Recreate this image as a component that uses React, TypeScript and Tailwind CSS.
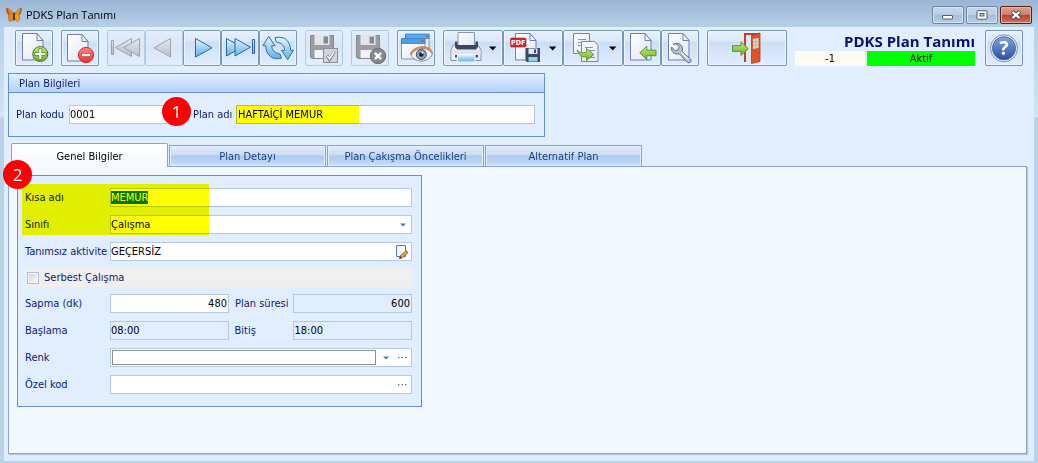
import React from 'react';

const tabs = ['Genel Bilgiler', 'Plan Detayı', 'Plan Çakışma Öncelikleri', 'Alternatif Plan'];

const fieldClass =
  'h-[19px] border border-[#b3c8e3] bg-white pr-px text-[11px] leading-4 text-black outline-none rounded-none';
const readOnlyClass =
  'h-[19px] border border-[#b3c8e3] bg-[#e1eeff] pr-px text-[11px] leading-4 text-black outline-none rounded-none';

type ToolProps = {
  label: string;
  disabled?: boolean;
  width?: number;
  children: React.ReactNode;
};

function Tool({ label, disabled, width = 38, children }: ToolProps) {
  return (
    <button
      type="button"
      aria-label={label}
      disabled={disabled}
      className={
        disabled
          ? 'h-9 shrink-0 rounded-[2px] border border-[#b3cae6] bg-linear-to-b from-[#e2edfb] via-[#d9e6f8] to-[#e2eeff]'
          : 'h-9 shrink-0 rounded-[2px] border border-[#7896c2] bg-[linear-gradient(#e6f0fd,#dbe8f9_30%,#cddef4_32%,#e0edff)] shadow-[inset_0_0_0_1px_#eef5ff]'
      }
    >
      <svg width={width - 2} height={34} viewBox={`1 1 ${width - 2} 34`} className="block">
        {children}
      </svg>
    </button>
  );
}

function Caret() {
  return <path d="M46 16.4h7.4l-3.7 4z" fill="#000" />;
}

function Page({ x = 7, y = 3, w = 21.5, h = 27.5 }) {
  return (
    <g stroke="#6f7fb0" strokeWidth="1">
      <path
        d={`M${x + 0.5} ${y + 0.5}h${w - 7}l6 7v${h - 8}h-${w - 1}z`}
        fill="url(#paper)"
      />
      <path d={`M${x + w - 6.5} ${y + 0.5}v7h6z`} fill="#f4f8ff" />
    </g>
  );
}

function Floppy() {
  return (
    <g>
      <path d="M5 5h24v24H7l-2-2z" fill="#9a9da1" />
      <path d="M5.5 5.5h23v23H7l-1.500-1.500z" fill="none" stroke="#85888d" />
      <rect x="9.500" y="5" width="15" height="10" fill="#e3e5e8" />
      <rect x="18.500" y="6.500" width="4.500" height="7" fill="#85888d" />
      <rect x="9.500" y="20" width="15" height="8" fill="#f0f2f5" />
    </g>
  );
}

function Defs() {
  return (
    <svg width="0" height="0" className="absolute" aria-hidden="true">
      <defs>
        <linearGradient id="paper" x1="0" y1="0" x2="1" y2="1">
          <stop offset="0" stopColor="#ffffff" />
          <stop offset="1" stopColor="#dfe7f6" />
        </linearGradient>
        <linearGradient id="green" x1="0" y1="0" x2="0" y2="1">
          <stop offset="0" stopColor="#c9ea7c" />
          <stop offset="1" stopColor="#6dae2c" />
        </linearGradient>
        <linearGradient id="red" x1="0" y1="0" x2="0" y2="1">
          <stop offset="0" stopColor="#ff8a86" />
          <stop offset="1" stopColor="#ee2c2c" />
        </linearGradient>
        <linearGradient id="blue" x1="0" y1="0" x2="0" y2="1">
          <stop offset="0" stopColor="#e3f6fe" />
          <stop offset="1" stopColor="#5fb0e8" />
        </linearGradient>
        <linearGradient id="gray" x1="0" y1="0" x2="0" y2="1">
          <stop offset="0" stopColor="#e6e9ee" />
          <stop offset="1" stopColor="#b9bec6" />
        </linearGradient>
        <linearGradient id="help" x1="0" y1="0" x2="0" y2="1">
          <stop offset="0" stopColor="#86a6e0" />
          <stop offset="1" stopColor="#2450a6" />
        </linearGradient>
      </defs>
    </svg>
  );
}

function Butterfly() {
  return (
    <svg width="16" height="16" viewBox="0 0 16 16" aria-hidden="true">
      <path d="M7.500 8.500C6.500 4.500 3.500 1.500.3 1c0 3 .7 6 2.700 7.500C1.800 10 2.200 13 4.200 14.700c2-.7 3-3 3.300-5.200z" fill="#ee8412" stroke="#a8601c" strokeWidth=".6" />
      <path d="M8.500 8.500C9.500 4.500 12.500 1.500 15.700 1c0 3-.7 6-2.700 7.500 1.200 1.500.8 4.500-1.200 6.200-2-.7-3-3-3.300-5.200z" fill="#f79a22" stroke="#a8601c" strokeWidth=".6" />
      <path d="M2.500 4l3.500 3.500M13.500 4L10 7.500" stroke="#c96a10" strokeWidth=".6" />
      <path d="M.8 1.500L3 8.200M15.200 1.500L13 8.200" stroke="#5f3a1e" strokeWidth=".7" />
      <path d="M8 5.500v8" stroke="#3c2110" strokeWidth="1.500" />
    </svg>
  );
}

function Toolbar() {
  return (
    <div className="flex items-start gap-2 pt-[3px] pr-[11px] pl-[11px]">
      <Tool label="Yeni">
        <Page />
        <circle cx="25.300" cy="24" r="7.500" fill="url(#green)" stroke="#3f7a17" />
        <path d="M23.800 18.500h3v4h4v3h-4v4h-3v-4h-4v-3h4z" fill="#fff" stroke="#4d8a1e" strokeWidth=".8" />
      </Tool>
      <Tool label="Sil">
        <Page x={6} y={4} />
        <circle cx="25" cy="25" r="7.600" fill="url(#red)" stroke="#c52a2a" />
        <rect x="20.500" y="23.500" width="9" height="3" fill="#fff" stroke="#c73030" strokeWidth=".6" />
      </Tool>
      <div className="flex">
        <Tool label="İlk" disabled>
          <g fill="url(#gray)" stroke="#9ba1aa">
            <path d="M4.500 10.500h2v14h-2z" />
            <path d="M24.500 8.500v18L8.500 17.500z" />
            <path d="M32.500 8.500v18l-16-9z" />
          </g>
        </Tool>
        <Tool label="Önceki" disabled>
          <path d="M25.500 8.500v18.500L9 17.800z" fill="url(#gray)" stroke="#9ba1aa" />
        </Tool>
        <Tool label="Sonraki">
          <path d="M12.500 8.500v18.500L29 17.800z" fill="url(#blue)" stroke="#2d64a8" />
        </Tool>
        <Tool label="Son">
          <g fill="url(#blue)" stroke="#2d64a8">
            <path d="M5.500 8.500v17.500l15.500-8.800z" />
            <path d="M14 8.500v17.500l15.500-8.800z" />
            <path d="M31.500 9.500h2v14h-2z" />
          </g>
        </Tool>
        <Tool label="Yenile">
          <g fill="url(#blue)" stroke="#3470b0">
            <path d="M9.700 6.300L16 15.700h-3.200C12.800 20 15.500 22.800 21 24l1.500 4.200C14 30.500 7 26 6.800 15.700H4z" />
            <path d="M28.700 29.700l-6.300-9.400h3.200c0-4.300-2.700-7.100-8.200-8.300L15.900 7.800C24.400 5.500 31.400 10 31.600 20.300h2.800z" />
          </g>
        </Tool>
      </div>
      <Tool label="Kaydet" disabled>
        <Floppy />
        <rect x="18.500" y="18.500" width="14" height="14" fill="#d0d3d8" stroke="#8b8e93" />
        <path d="M22 25.500l2.500 4 5-8" fill="none" stroke="#7b7e83" strokeWidth="3" />
        <path d="M22.300 25.800l2.200 3.200 4.700-7.300" fill="none" stroke="#fff" strokeWidth="1.500" />
      </Tool>
      <Tool label="Vazgeç" disabled>
        <Floppy />
        <circle cx="27" cy="26" r="7.700" fill="#85888c" stroke="#6b6e72" />
        <path d="M23.800 22.800l6.400 6.400M30.200 22.800l-6.400 6.400" stroke="#fff" strokeWidth="2.600" />
      </Tool>
      <Tool label="Önizleme">
        <path d="M8.500 4.500h23.500v21H8.500z" fill="#eaf2fc" stroke="#7b93bf" />
        <path d="M8.500 4h23.500v4.500H8.500z" fill="#5aa9ea" stroke="#3b7fc4" strokeWidth=".8" />
        <path d="M4.500 9h23.500v20H4.500z" fill="url(#paper)" stroke="#7b93bf" />
        <path d="M4.500 8.500h23.500v5H4.500z" fill="#4b9fe6" stroke="#3b7fc4" strokeWidth=".8" />
        <path d="M24.500 10h2v2h-2zM29 5.500h2v1.500h-2z" fill="#e8453c" />
        <path d="M14 25c4-8 17-9 21.500-1-4 9-17 9.500-21.500 1z" fill="#f3f5f8" stroke="#6b6f7a" strokeWidth=".8" />
        <path d="M13.500 24.500c5-9.500 18-10 22-1" fill="none" stroke="#cf8b4a" strokeWidth="2" />
        <circle cx="24.300" cy="24.500" r="5" fill="#8ba2bd" stroke="#434b5c" />
        <circle cx="24.300" cy="24.500" r="2.300" fill="#1b2230" />
        <circle cx="25.500" cy="22.800" r="1" fill="#fff" />
      </Tool>
      <div className="flex">
        <Tool label="Yazdır" width={60}>
          <path d="M10 15h25l3 5v10.500H8V20z" fill="url(#paper)" stroke="#8691b2" />
          <path d="M15 2.500h16.500V16H15z" fill="url(#paper)" stroke="#8a94b5" />
          <path d="M12 11.500h2.500V15h18v-3.500H35V17l-2 2.500H14L12 17z" fill="#3d4660" />
          <path d="M8.500 20h29v5h-29z" fill="#dfe4f0" />
          <path d="M12 25h23v2.500H12z" fill="#47506b" />
          <path d="M14.500 24.500h17.500V32H14.500z" fill="url(#blue)" stroke="#f6f9ff" />
          <Caret />
        </Tool>
        <Tool label="PDF olarak kaydet" width={60}>
          <Page x={12} />
          <rect x="7.500" y="8" width="15.500" height="9" rx="1" fill="#cf2a2e" stroke="#a81d22" strokeWidth=".6" />
          <text x="15.200" y="15" textAnchor="middle" fontFamily="DejaVu Sans Condensed" fontSize="7" fontWeight="bold" fill="#fff">PDF</text>
          <path d="M22.500 18h14.500v14H24l-1.500-1.500z" fill="#3e4863" />
          <rect x="25.500" y="18.500" width="9" height="5.500" fill="#e4e9f3" />
          <rect x="31" y="19.500" width="2" height="3.500" fill="#3e4863" />
          <rect x="25.500" y="27" width="9" height="4.500" fill="#8fd0f5" />
          <Caret />
        </Tool>
        <Tool label="Kopyala" width={60}>
          <path d="M10.500 3.500h16v20h-16z" fill="url(#paper)" stroke="#7484b3" />
          <path d="M15 9.500h8M15 12.500h8M15 15.500h5" stroke="#8490b5" />
          <path d="M18.500 11.500h13l3.500 4v16H18.500z" fill="url(#paper)" stroke="#7484b3" />
          <path d="M22 17.500h8M24 20.500h8M27 27.500h5" stroke="#8490b5" />
          <path d="M14 20c2 2.500 5 3 9.500 2.500V18.500l7.500 6-7.500 6V27c-5 .5-8-2-9.500-7z" fill="url(#green)" stroke="#4f8a23" strokeWidth=".8" />
          <Caret />
        </Tool>
        <Tool label="İçe aktar">
          <Page />
          <path d="M16.800 22.700l7-6.500v4H33v5.500h-9.200v4z" fill="url(#green)" stroke="#4f9a2c" />
        </Tool>
        <Tool label="Ayarlar">
          <Page />
          <path
            d="M12 14.500c4-2.500 9.500-.5 9.500 4.500 0 1-.2 1.800-.5 2.500l8.500 7.500c2 2.500-1 5-3.300 3l-8-8.200c-4.700 1.200-8.500-2-7.700-6.800l3.700 3.700 3.200-1 .8-3-3.200-3z"
            fill="#b5c1d2"
            stroke="#5d6c87"
          />
          <path d="M20.500 22.500l7 7" stroke="#e7edf6" strokeWidth="1.500" />
        </Tool>
      </div>
      <Tool label="Çıkış" width={80}>
        <path d="M38 32V4h14" fill="none" stroke="#c5421c" strokeWidth="2" />
        <path d="M39 5h6v27h-6z" fill="#dbe9fb" />
        <path d="M44.500 5.500l8.500-2.500v28.500l-8.500 2z" fill="#dd5527" stroke="#b33c17" strokeWidth=".8" />
        <path d="M46 9l5.500-1v10L46 19z" fill="#dfe5d2" />
        <path d="M48.700 8.500v10M46 12.200l5.500-.8M46 15.600l5.500-.8" stroke="#c99a78" strokeWidth=".8" />
        <path d="M25.500 15.700H34v-3.900l7.300 6.900-7.300 6.700v-4h-8.500z" fill="url(#green)" stroke="#4f9a2c" />
      </Tool>
      <div className="mr-0.5 ml-auto w-[180px] shrink-0">
        <h1 className="h-[21px] text-right font-['Open_Sans','Noto_Sans',sans-serif] text-[15px] leading-[22px] font-bold text-[#04146e]">
          PDKS Plan Tanımı
        </h1>
        <div className="flex gap-0.5 text-center text-[11px] leading-[15px] text-black">
          <span className="w-[70px] bg-[#fffaf0]">-1</span>
          <span className="flex-1 bg-[#00ff00]">Aktif</span>
        </div>
      </div>
      <Tool label="Yardım">
        <circle cx="19" cy="18.300" r="13.500" fill="#e9eff8" stroke="#7f8fb0" />
        <circle cx="19" cy="18.300" r="11.500" fill="url(#help)" stroke="#4565a8" />
        <text x="19" y="25" textAnchor="middle" fontFamily="Open Sans" fontSize="19" fontWeight="bold" fill="#fff">?</text>
      </Tool>
    </div>
  );
}

function StepBadge({ n, className }: { n: number; className: string }) {
  return (
    <span
      className={`absolute z-20 flex size-[29px] items-center justify-center rounded-full bg-[#ff0000] font-['Open_Sans',sans-serif] text-[17px] leading-none text-white ${className}`}
    >
      {n}
    </span>
  );
}

function DownArrow({ className }: { className?: string }) {
  return (
    <svg width="6" height="4" viewBox="0 0 6 4" className={className} aria-hidden="true">
      <path d="M0 0.500h6L3 3.500z" fill="#4a78b0" />
    </svg>
  );
}

function Dots() {
  return (
    <svg width="9" height="2" viewBox="0 0 9 2" aria-hidden="true">
      <path d="M0 0h1.500v1.200H0zM3.500 0H5v1.200H3.500zM7 0h1.500v1.200H7z" fill="#4a78b0" />
    </svg>
  );
}

function Row({ id, label, children }: { id: string; label: string; children: React.ReactNode }) {
  return (
    <div className="flex h-[19px] items-center">
      <label htmlFor={id} className="w-[85px] shrink-0">{label}</label>
      {children}
    </div>
  );
}

function GeneralForm() {
  return (
    <div className="relative w-[405px] border border-[#6390cf] bg-[#e1eeff] pt-3 pr-[9px] pb-3 pl-[7px]">
      <StepBadge n={2} className="-top-[16px] -left-[15px]" />
      <div className="pointer-events-none absolute top-2 left-1 z-10 h-[51px] w-[187px] bg-[#ffff00] mix-blend-multiply" />
      <div className="flex flex-col gap-[7px]">
        <div className="flex flex-col gap-2">
          <Row id="kisa" label="Kısa adı">
            <input
              id="kisa"
              autoFocus
              onFocus={(e) => e.target.select()}
              defaultValue="MEMUR"
              className={`${fieldClass} min-w-0 flex-1 selection:bg-[#0078d7] selection:text-white`}
            />
          </Row>
          <Row id="sinif" label="Sınıfı">
            <div className="relative flex min-w-0 flex-1">
              <select id="sinif" className={`${fieldClass} w-full appearance-none`}>
                <option>Çalışma</option>
              </select>
              <DownArrow className="pointer-events-none absolute top-2 right-[6px]" />
            </div>
          </Row>
          <Row id="aktivite" label="Tanımsız aktivite">
            <div className="flex h-[19px] min-w-0 flex-1 items-center border border-[#b3c8e3] bg-white pr-[3px]">
              <input
                id="aktivite"
                defaultValue="GEÇERSİZ"
                className="min-w-0 flex-1 text-[11px] leading-4 text-black outline-none"
              />
              <button type="button" aria-label="Aktivite düzenle">
                <svg width="12" height="14" viewBox="0 0 12 14" className="block">
                  <path d="M.5.500h9v11h-9z" fill="#f2f6fd" stroke="#6077a8" />
                  <path d="M10.500 5.500l-6 5-1 3 3-.7 5.500-5z" fill="#e3a24f" stroke="#8a5722" strokeWidth=".8" />
                  <path d="M3.300 13.500l.8-2 1.700 1.500z" fill="#222" />
                </svg>
              </button>
            </div>
          </Row>
        </div>
        <label className="-mr-px flex h-[19px] items-center gap-[5px] bg-[#efefef] pl-[2px]">
          <input
            type="checkbox"
            className="size-3 appearance-none border border-[#a9bedb] bg-linear-to-br from-[#c9cdd4] to-white shadow-[inset_0_0_0_1px_#f4f7fb]"
          />
          Serbest Çalışma
        </label>
        <div className="flex flex-col gap-2">
          <Row id="sapma" label="Sapma (dk)">
            <input id="sapma" defaultValue="480" className={`${fieldClass} min-w-0 flex-1 text-right`} />
            <label htmlFor="sure" className="w-16 shrink-0 pl-1.5">Plan süresi</label>
            <input id="sure" readOnly value="600" className={`${readOnlyClass} min-w-0 flex-1 text-right`} />
          </Row>
          <Row id="baslama" label="Başlama">
            <input id="baslama" readOnly value="08:00" className={`${readOnlyClass} min-w-0 flex-1`} />
            <label htmlFor="bitis" className="w-16 shrink-0 pl-1.5">Bitiş</label>
            <input id="bitis" readOnly value="18:00" className={`${readOnlyClass} min-w-0 flex-1 pl-px`} />
          </Row>
          <Row id="renk" label="Renk">
            <div className="flex h-[19px] min-w-0 flex-1 items-center border border-[#b3c8e3] bg-white pr-1 pl-px">
              <input
                id="renk"
                readOnly
                className="h-[15px] min-w-0 flex-1 border border-[#8f8f8f] bg-white outline-none"
              />
              <button type="button" aria-label="Renk seç" className="flex h-4 w-[19px] items-center justify-center">
                <DownArrow />
              </button>
              <button type="button" aria-label="Diğer renkler" className="flex h-4 w-3 items-center justify-end">
                <Dots />
              </button>
            </div>
          </Row>
          <Row id="ozel" label="Özel kod">
            <div className="flex h-[19px] min-w-0 flex-1 items-center border border-[#b3c8e3] bg-white pr-1">
              <input id="ozel" className="min-w-0 flex-1 text-[11px] leading-4 text-black outline-none" />
              <button type="button" aria-label="Özel kod seç" className="flex h-4 w-3 items-center justify-end">
                <Dots />
              </button>
            </div>
          </Row>
        </div>
      </div>
    </div>
  );
}

const windowButton = 'flex h-[18px] w-8 items-center justify-center rounded-[2px] border';

export default function App() {
  return (
    <div className="flex min-h-screen flex-col bg-[#b9d1ea] bg-[linear-gradient(#9bb5d3,#b6d0e9_27px,#d3e4f5_117px,#b9d1ea_118px)] px-1 pb-0.5 font-['DejaVu_Sans_Condensed','DejaVu_Sans',sans-serif] text-[11px] leading-4 text-[#0d1b77]">
      <Defs />
      <header className="flex h-[27px] shrink-0 items-center px-0.5 pt-0.5">
        <Butterfly />
        <span className="ml-1 flex-1 font-['Open_Sans','Noto_Sans',sans-serif] text-[11px] text-black">PDKS Plan Tanımı</span>
        <div className="flex gap-0.5">
          <button type="button" aria-label="Simge durumuna küçült" className={`${windowButton} border-[#6b86a8] bg-[linear-gradient(#c7d8eb,#b9cde4_50%,#a3bcd8_50%,#b9d0e9)] shadow-[inset_0_0_0_1px_#d5e3f1]`}>
            <svg width="12" height="14" viewBox="0 0 12 14">
              <rect x=".5" y="7.500" width="10" height="3.500" rx=".5" fill="#fff" stroke="#545c6b" />
            </svg>
          </button>
          <button type="button" aria-label="Ekranı kapla" className={`${windowButton} border-[#6b86a8] bg-[linear-gradient(#c7d8eb,#b9cde4_50%,#a3bcd8_50%,#b9d0e9)] shadow-[inset_0_0_0_1px_#d5e3f1]`}>
            <svg width="12" height="10" viewBox="0 0 12 10">
              <rect x="1" y=".7" width="10" height="8.500" rx=".5" fill="#fff" stroke="#545c6b" />
              <rect x="4" y="3.500" width="4" height="2.500" fill="#b9cde4" stroke="#545c6b" />
            </svg>
          </button>
          <button type="button" aria-label="Kapat" className={`${windowButton} border-[#5d1a1a] bg-[linear-gradient(#dfa192,#d07c69_50%,#b8402c_50%,#cc7660)] shadow-[inset_0_0_0_1px_#e3b2a6]`}>
            <svg width="12" height="10" viewBox="0 0 12 10">
              <path d="M2 1.500l8 7M10 1.500l-8 7" stroke="#4c4f5c" strokeWidth="4" />
              <path d="M2.500 2l7 6M9.500 2l-7 6" stroke="#fff" strokeWidth="2.200" />
            </svg>
          </button>
        </div>
      </header>

      <main className="flex flex-1 flex-col bg-[#e1eeff]">
        <Toolbar />

        <section className="mt-[7px] ml-1 w-[537px] border border-[#6390cf]">
          <h2 className="h-[19px] border-b border-[#6390cf] bg-linear-to-b from-[#e1eeff] to-[#b2d2fd] pl-[10px] leading-[19px]">
            Plan Bilgileri
          </h2>
          <div className="relative flex h-[43px] items-center pr-[9px] pl-[7px]">
            <label htmlFor="kod" className="w-[53px] shrink-0">Plan kodu</label>
            <input id="kod" defaultValue="0001" className={`${fieldClass} w-[116px]`} />
            <StepBadge n={1} className="top-1 left-[153px]" />
            <label htmlFor="ad" className="ml-2 w-[43px] shrink-0">Plan adı</label>
            <div className="relative flex min-w-0 flex-1">
              <input id="ad" defaultValue="HAFTAİÇİ MEMUR" className={`${fieldClass} w-full pl-px`} />
              <div className="pointer-events-none absolute inset-y-0 left-0 w-[123px] bg-[#ffff00] mix-blend-multiply" />
            </div>
          </div>
        </section>

        <div role="tablist" className="relative z-10 mt-1.5 -mb-px ml-[7px] flex h-6 items-end gap-px">
          {tabs.map((tab, i) => (
            <button
              key={tab}
              type="button"
              role="tab"
              aria-selected={i === 0}
              className={
                i === 0
                  ? 'h-6 w-[157px] rounded-t-[2px] border border-b-0 border-[#8ba3cd] bg-linear-to-b from-[#fdfeff] to-[#f3f8ff] pt-0.5 text-black'
                  : 'h-[22px] w-[157px] border border-[#8ba3cd] bg-[linear-gradient(#e2ecf9,#cbdcf3_45%,#adc9ee_50%,#c9dffb)] pt-0.5 text-[#16408b] shadow-[inset_0_0_0_1px_#e3eefc]'
              }
            >
              {tab}
            </button>
          ))}
        </div>

        <div
          role="tabpanel"
          className="mr-[7px] mb-[7px] ml-1 flex-1 border border-[#8ba3cd] bg-[#f3f8ff] pt-2 pb-6 pl-2 shadow-[1px_1px_1px_#b4c8e6]"
        >
          <GeneralForm />
        </div>
      </main>
    </div>
  );
}
